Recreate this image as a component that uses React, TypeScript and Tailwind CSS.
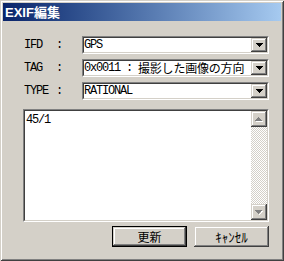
import React from 'react';

const mono = "font-['Liberation_Mono','Noto_Sans_CJK_JP',monospace] text-[12px] tracking-[-1.2px] text-black";

function DownArrow({ color = '#000' }: { color?: string }) {
  return (
    <svg width="7" height="4" viewBox="0 0 7 4" shapeRendering="crispEdges">
      <rect x="0" y="0" width="7" height="1" fill={color} />
      <rect x="1" y="1" width="5" height="1" fill={color} />
      <rect x="2" y="2" width="3" height="1" fill={color} />
      <rect x="3" y="3" width="1" height="1" fill={color} />
    </svg>
  );
}

function UpArrowDisabled() {
  return (
    <svg width="8" height="5" viewBox="0 0 8 5" shapeRendering="crispEdges">
      <rect x="4" y="1" width="1" height="1" fill="#fff" />
      <rect x="5" y="2" width="1" height="1" fill="#fff" />
      <rect x="6" y="3" width="1" height="1" fill="#fff" />
      <rect x="1" y="4" width="7" height="1" fill="#fff" />
      <rect x="3" y="0" width="1" height="1" fill="#808080" />
      <rect x="2" y="1" width="3" height="1" fill="#808080" />
      <rect x="1" y="2" width="5" height="1" fill="#808080" />
      <rect x="0" y="3" width="7" height="1" fill="#808080" />
    </svg>
  );
}

function DownArrowDisabled() {
  return (
    <svg width="8" height="5" viewBox="0 0 8 5" shapeRendering="crispEdges">
      <rect x="1" y="1" width="7" height="1" fill="#fff" />
      <rect x="6" y="2" width="1" height="1" fill="#fff" />
      <rect x="5" y="3" width="1" height="1" fill="#fff" />
      <rect x="4" y="4" width="1" height="1" fill="#fff" />
      <rect x="0" y="0" width="7" height="1" fill="#808080" />
      <rect x="1" y="1" width="5" height="1" fill="#808080" />
      <rect x="2" y="2" width="3" height="1" fill="#808080" />
      <rect x="3" y="3" width="1" height="1" fill="#808080" />
    </svg>
  );
}

const raised =
  'bg-[#d4d0c8] shadow-[inset_-1px_-1px_0_#404040,inset_1px_1px_0_#d4d0c8,inset_-2px_-2px_0_#808080,inset_2px_2px_0_#fff]';

function Sunken({ className = '', children }: { className?: string; children: React.ReactNode }) {
  return (
    <div className={`border border-t-[#808080] border-l-[#808080] border-b-white border-r-white ${className}`}>
      <div className="h-full border border-t-[#404040] border-l-[#404040] border-b-[#d4d0c8] border-r-[#d4d0c8] bg-white flex">
        {children}
      </div>
    </div>
  );
}

function Combo({ label, children }: { label: string; children: React.ReactNode }) {
  return (
    <div className="flex items-center h-[18px]">
      <span className={`${mono} w-[33px] pl-[1px]`}>{label}</span>
      <span className={`${mono} w-[26px]`}>:</span>
      <Sunken className="flex-1 h-[18px]">
        <div className={`flex-1 flex items-center ${mono} leading-none whitespace-pre`}>
          {children}
        </div>
        <div className={`w-[16px] h-full flex items-center justify-center ${raised}`}>
          <DownArrow />
        </div>
      </Sunken>
    </div>
  );
}

export default function App() {
  return (
    <div className="w-[284px] h-[261px] bg-[#d4d0c8] p-[3px] flex flex-col shadow-[inset_1px_1px_0_#d4d0c8,inset_-1px_-1px_0_#404040,inset_2px_2px_0_#fff,inset_-2px_-2px_0_#808080]">
      <div className="h-[18px] flex items-center pl-[2px] bg-gradient-to-r from-[#0a246a] to-[#a6caf0]">
        <span className="text-white font-bold text-[13px] leading-none font-['Liberation_Sans','Noto_Sans_CJK_JP',sans-serif]">
          EXIF編集
        </span>
      </div>

      <div className="flex-1 flex flex-col pl-[20px] pr-[12px] pt-[15px]">
        <div className="flex flex-col gap-[5px]">
          <Combo label="IFD">GPS</Combo>
          <Combo label="TAG">
            <span className="whitespace-pre">{'0x0011 : '}</span>
            <span className="font-['Noto_Sans_CJK_JP',sans-serif] text-[12px] tracking-[-0.2px]">撮影した画像の方向</span>
          </Combo>
          <Combo label="TYPE">RATIONAL</Combo>
        </div>

        <Sunken className="mt-[9px] h-[113px]">
          <div className={`flex-1 pl-[1px] pt-[2px] ${mono} leading-[14px]`}>45/1</div>
          <div className="w-[16px] flex flex-col bg-[repeating-conic-gradient(#fff_0_25%,#d4d0c8_0_50%)] bg-[length:2px_2px]">
            <div className={`h-[16px] flex items-center justify-center ${raised}`}>
              <UpArrowDisabled />
            </div>
            <div className="flex-1" />
            <div className={`h-[16px] flex items-center justify-center ${raised}`}>
              <DownArrowDisabled />
            </div>
          </div>
        </Sunken>

        <div className="mt-[4px] flex justify-end gap-[7px]">
          <div className="w-[75px] h-[21px] border border-black">
            <div className={`h-full flex items-center justify-center ${raised} text-[12px] text-black font-['Noto_Sans_CJK_JP',sans-serif]`}>
              更新
            </div>
          </div>
          <div className={`w-[75px] h-[21px] flex items-center justify-center ${raised} text-[13px] text-black font-['Noto_Sans_CJK_JP',sans-serif]`}>
            ｷｬﾝｾﾙ
          </div>
        </div>
      </div>
    </div>
  );
}
